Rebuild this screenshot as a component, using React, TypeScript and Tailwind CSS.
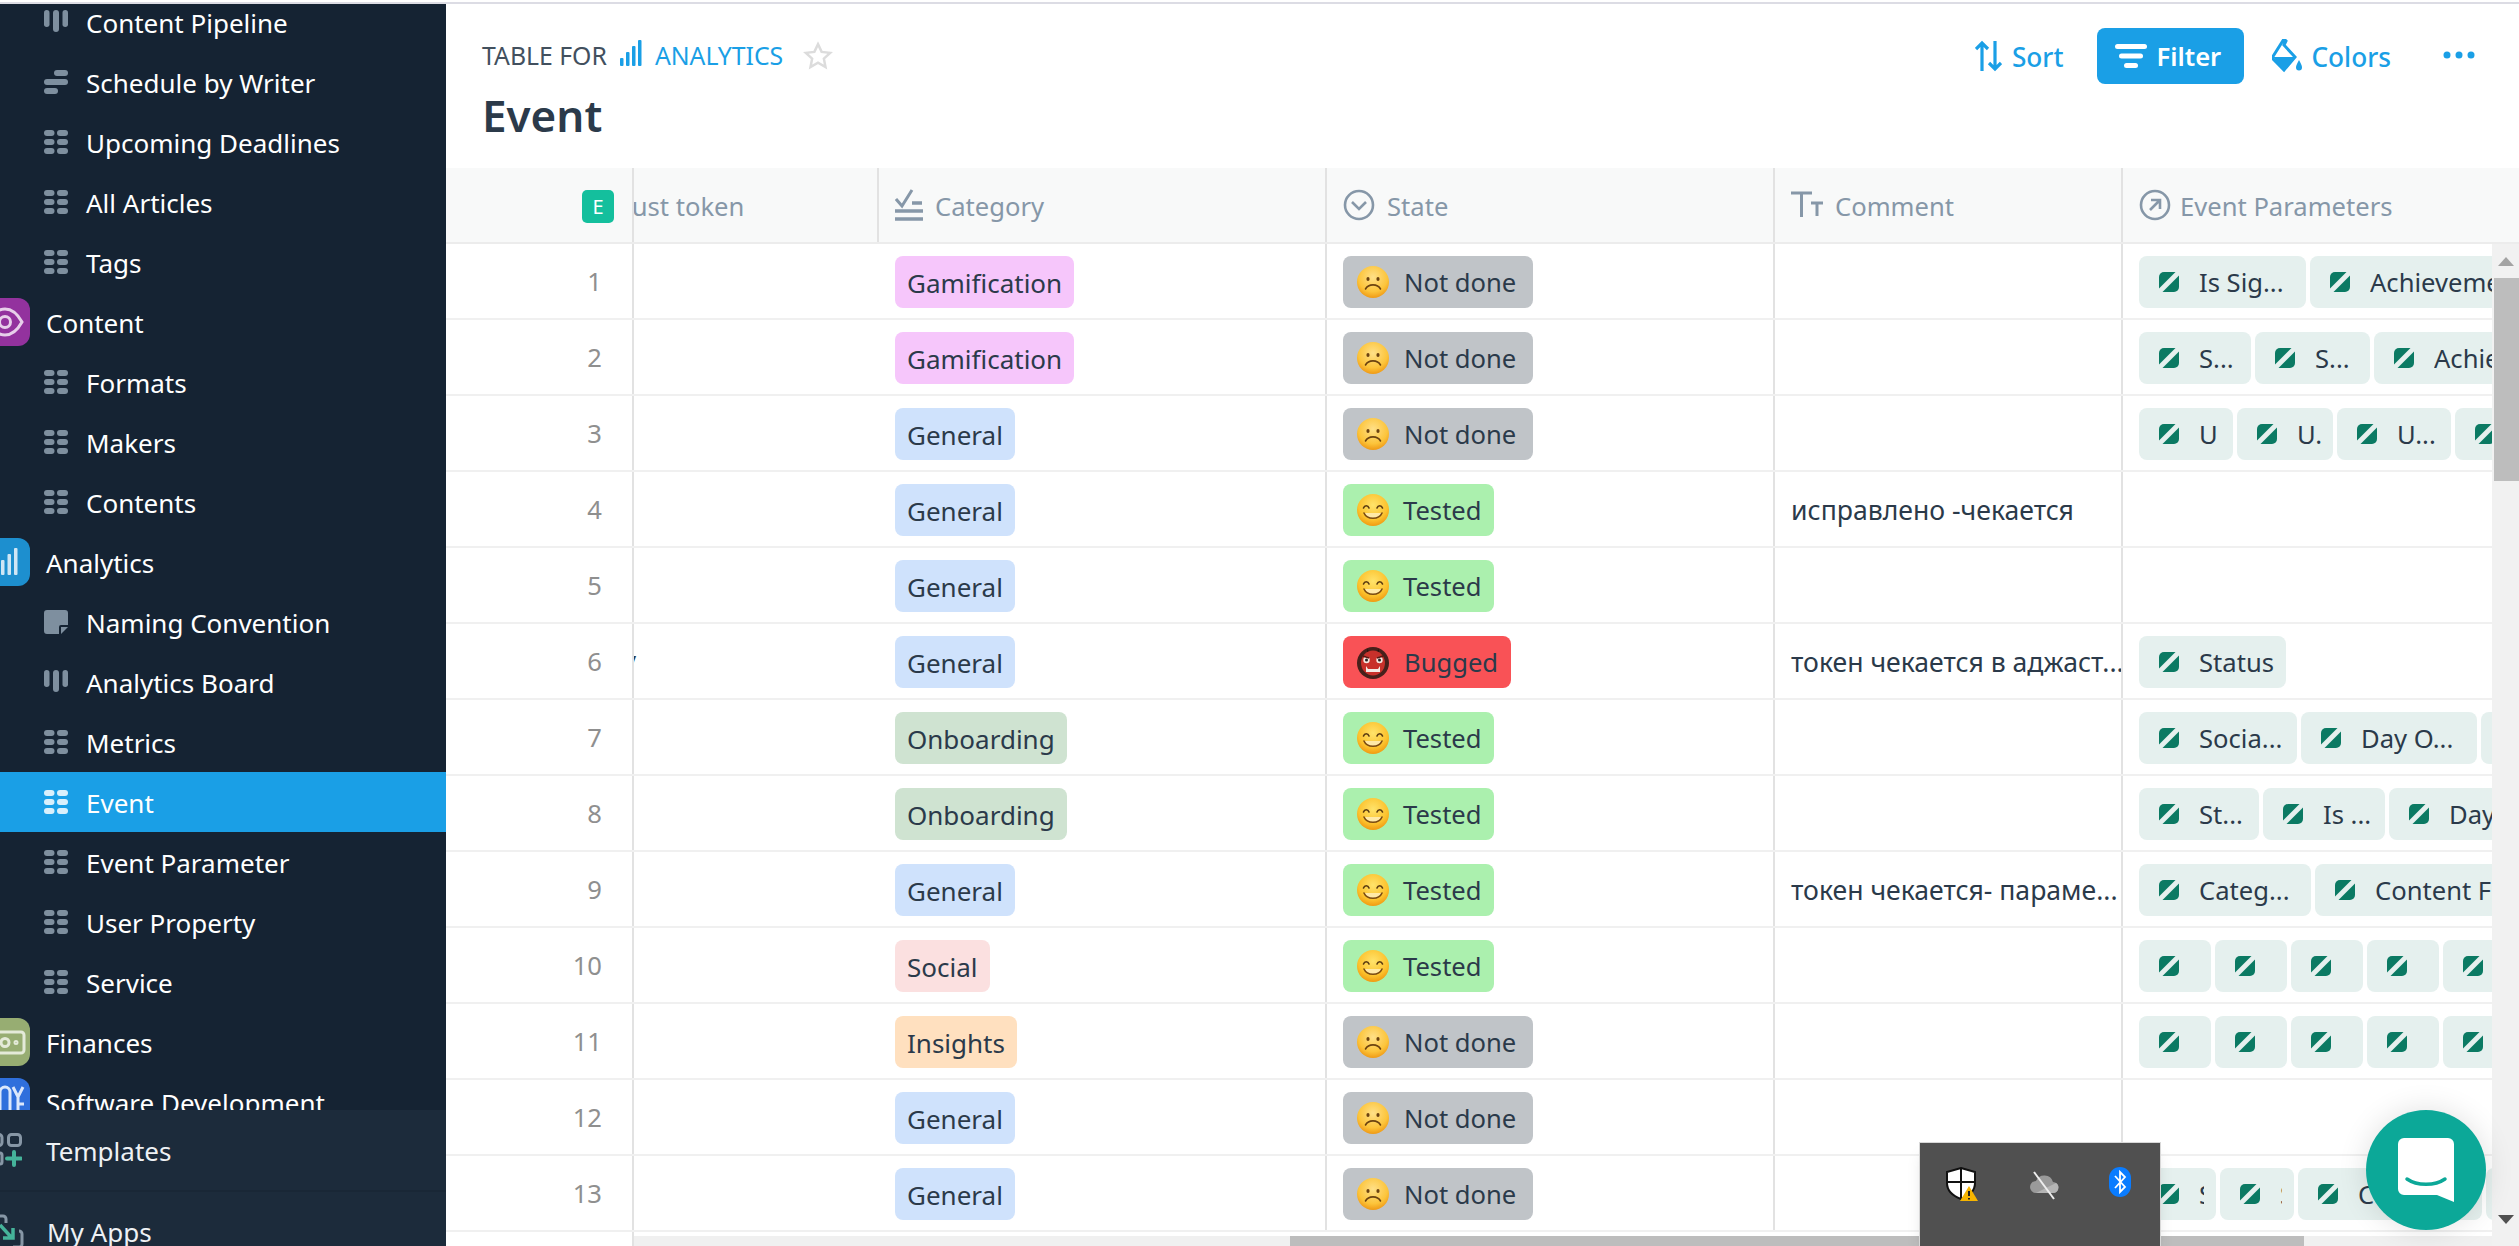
import type { ReactNode } from "react";

type NavItem =
  | { kind: "table" | "board" | "schedule" | "note"; label: string; active?: boolean }
  | { kind: "group"; label: string; icon: ReactNode; bg: string };

function GridIcon({ color = "#7e8f9f" }: { color?: string }) {
  return (
    <svg width="24" height="24" viewBox="0 0 24 24" fill={color}>
      <rect x="0" y="0" width="10.5" height="6" rx="3" />
      <rect x="13" y="0" width="11" height="6" rx="3" />
      <rect x="0" y="9" width="10.5" height="6" rx="3" />
      <rect x="13" y="9" width="11" height="6" rx="3" />
      <rect x="0" y="18" width="10.5" height="6" rx="3" />
      <rect x="13" y="18" width="11" height="6" rx="3" />
    </svg>
  );
}

function BoardIcon() {
  return (
    <svg width="24" height="24" viewBox="0 0 24 24" fill="#7e8f9f">
      <rect x="0" y="0" width="5.5" height="17" rx="2.7" />
      <rect x="9" y="0" width="6" height="22" rx="3" />
      <rect x="18.5" y="0" width="5.5" height="17" rx="2.7" />
    </svg>
  );
}

function ScheduleIcon() {
  return (
    <svg width="24" height="24" viewBox="0 0 24 24" fill="#7e8f9f">
      <rect x="10" y="0" width="14" height="6" rx="3" />
      <rect x="0" y="9" width="24" height="6" rx="3" />
      <rect x="0" y="18" width="14" height="6" rx="3" />
    </svg>
  );
}

function NoteIcon() {
  return (
    <svg width="24" height="24" viewBox="0 0 24 24" fill="#7e8f9f">
      <path d="M3 0h18a3 3 0 0 1 3 3v12h-7a2 2 0 0 0-2 2v7H3a3 3 0 0 1-3-3V3a3 3 0 0 1 3-3z" />
      <path d="M17 17h7l-7 7z" />
    </svg>
  );
}

const navItems: NavItem[] = [
  { kind: "board", label: "Content Pipeline" },
  { kind: "schedule", label: "Schedule by Writer" },
  { kind: "table", label: "Upcoming Deadlines" },
  { kind: "table", label: "All Articles" },
  { kind: "table", label: "Tags" },
  {
    kind: "group",
    label: "Content",
    bg: "bg-[#93329e]",
    icon: (
      <svg width="48" height="48" viewBox="0 0 48 48" fill="none" stroke="#e7cfea" strokeWidth="3">
        <path d="M6 24c5-9 11-13 17-13s12 4 17 13c-5 9-11 13-17 13s-12-4-17-13z" />
        <circle cx="23" cy="24" r="5.500" />
      </svg>
    ),
  },
  { kind: "table", label: "Formats" },
  { kind: "table", label: "Makers" },
  { kind: "table", label: "Contents" },
  {
    kind: "group",
    label: "Analytics",
    bg: "bg-[#1d8fcf]",
    icon: (
      <svg width="48" height="48" viewBox="0 0 48 48" fill="#cfe6f5">
        <rect x="19" y="22" width="3.500" height="15" rx="1" />
        <rect x="25.500" y="16" width="3.500" height="21" rx="1" />
        <rect x="32" y="10" width="3.500" height="27" rx="1" />
      </svg>
    ),
  },
  { kind: "note", label: "Naming Convention" },
  { kind: "board", label: "Analytics Board" },
  { kind: "table", label: "Metrics" },
  { kind: "table", label: "Event", active: true },
  { kind: "table", label: "Event Parameter" },
  { kind: "table", label: "User Property" },
  { kind: "table", label: "Service" },
  {
    kind: "group",
    label: "Finances",
    bg: "bg-[#97ad72]",
    icon: (
      <svg width="48" height="48" viewBox="0 0 48 48" fill="none" stroke="#e4ead8" strokeWidth="3">
        <rect x="4" y="14" width="38" height="21" rx="3" />
        <circle cx="23" cy="24.500" r="4" />
        <circle cx="34" cy="24.500" r="1" />
      </svg>
    ),
  },
  {
    kind: "group",
    label: "Software Development",
    bg: "bg-[#2f6fdc]",
    icon: (
      <svg width="48" height="48" viewBox="0 0 48 48" fill="none" stroke="#dbe7fb" strokeWidth="3">
        <path d="M18 34V14a5 5 0 0 1 10 0v20M31 9l5 10 5-10M36 19v15M36 26h6" />
      </svg>
    ),
  },
];

function NavRow({ item }: { item: NavItem }) {
  if (item.kind === "group") {
    return (
      <div className="flex h-[60px] items-center text-white">
        <div className={`-ml-[18px] h-12 w-12 shrink-0 overflow-hidden rounded-xl ${item.bg}`}>{item.icon}</div>
        <span className="mt-[2px] ml-4 whitespace-nowrap">{item.label}</span>
      </div>
    );
  }
  return (
    <div className={`flex h-[60px] items-center pl-11 text-white ${item.active ? "bg-[#1a9fe6]" : ""}`}>
      <div className="h-6 w-6 shrink-0">
        {item.kind === "table" && <GridIcon color={item.active ? "#d9f0fc" : "#7e8f9f"} />}
        {item.kind === "board" && <BoardIcon />}
        {item.kind === "schedule" && <ScheduleIcon />}
        {item.kind === "note" && <NoteIcon />}
      </div>
      <span className="mt-[2px] ml-[18px] whitespace-nowrap">{item.label}</span>
    </div>
  );
}

function Sidebar() {
  return (
    <aside className="flex w-[446px] shrink-0 flex-col bg-[#152333] text-[26px]">
      <div className="min-h-0 flex-1 overflow-hidden">
        <div className="-mt-3">
          {navItems.map((item) => (
            <NavRow key={item.label} item={item} />
          ))}
        </div>
      </div>
      <div className="h-[136px] shrink-0 overflow-hidden bg-[#1c2b3b] text-[#eef1f4]">
        <div className="flex h-[82px] items-center border-b-2 border-[#192736]">
          <svg width="22" height="34" viewBox="0 0 22 34" className="shrink-0" fill="none">
            <rect x="-9" y="1.500" width="11" height="11" rx="3" stroke="#8797a6" strokeWidth="3" />
            <rect x="8.500" y="1.500" width="12" height="11" rx="3" stroke="#8797a6" strokeWidth="3" />
            <rect x="-6" y="20" width="8" height="11" rx="2" stroke="#8797a6" strokeWidth="3" />
            <path d="M14 19v13M7 25.500h14" stroke="#45b39a" strokeWidth="4" strokeLinecap="round" />
          </svg>
          <span className="mt-[2px] ml-[24px]">Templates</span>
        </div>
        <div className="flex h-20 items-center">
          <svg width="24" height="36" viewBox="0 0 24 36" className="shrink-0" fill="none">
            <path d="M0 2h3a3 3 0 0 1 3 3v4" stroke="#8797a6" strokeWidth="3" />
            <path d="M19 17a3 3 0 0 1 3 3v10a3 3 0 0 1-3 3h-6" stroke="#8797a6" strokeWidth="3" />
            <path d="M0 11l12 13M13 14v10H3" stroke="#45b39a" strokeWidth="3.500" />
          </svg>
          <span className="ml-[23px]">My Apps</span>
        </div>
      </div>
    </aside>
  );
}

function LeafIcon() {
  return (
    <svg width="20" height="20" viewBox="0 0 20 20" className="shrink-0">
      <path d="M5 0h11.500L0 16.500V5a5 5 0 0 1 5-5z" fill="#0b7a63" />
      <path d="M20 3.500V15a5 5 0 0 1-5 5H3.500z" fill="#0b7a63" />
    </svg>
  );
}

type ChipData = { label?: string; width: string };

function Chip({ label, width }: ChipData) {
  return (
    <div className={`flex h-[52px] shrink-0 items-center overflow-hidden rounded-lg bg-[#e5f0ee] pr-3 pl-5 ${width}`}>
      <LeafIcon />
      {label && <span className="mt-[2px] ml-5 min-w-0 overflow-hidden whitespace-nowrap">{label}</span>}
    </div>
  );
}

function SmileFace() {
  return (
    <svg width="32" height="32" viewBox="0 0 32 32" className="shrink-0">
      <defs>
        <radialGradient id="smile-bg" cx="50%" cy="35%" r="65%">
          <stop offset="0%" stopColor="#ffe36b" />
          <stop offset="70%" stopColor="#fcc22d" />
          <stop offset="100%" stopColor="#f09a12" />
        </radialGradient>
      </defs>
      <circle cx="16" cy="16" r="16" fill="url(#smile-bg)" />
      <path d="M6.500 14c1-3 4.500-3 5.500 0M20 14c1-3 4.500-3 5.500 0" stroke="#5a3a10" strokeWidth="1.600" fill="none" strokeLinecap="round" />
      <path d="M7 19c3 7 15 7 18 0" stroke="#7a4a10" strokeWidth="1.600" fill="#ffe9a8" strokeLinecap="round" />
    </svg>
  );
}

function SadFace() {
  return (
    <svg width="32" height="32" viewBox="0 0 32 32" className="shrink-0">
      <defs>
        <radialGradient id="sad-bg" cx="50%" cy="35%" r="65%">
          <stop offset="0%" stopColor="#ffe088" />
          <stop offset="70%" stopColor="#fcc43a" />
          <stop offset="100%" stopColor="#ef9a16" />
        </radialGradient>
      </defs>
      <circle cx="16" cy="16" r="16" fill="url(#sad-bg)" />
      <ellipse cx="11" cy="13" rx="1.600" ry="2" fill="#6b4210" />
      <ellipse cx="21" cy="13" rx="1.600" ry="2" fill="#6b4210" />
      <path d="M8.500 23c3-5.500 12-5.500 15 0" stroke="#6b4210" strokeWidth="1.600" fill="none" strokeLinecap="round" />
    </svg>
  );
}

function OgreFace() {
  return (
    <svg width="34" height="34" viewBox="0 0 34 34" className="shrink-0">
      <circle cx="17" cy="18" r="16" fill="#47201b" />
      <path d="M11 4l3 3h6l3-3v6H11z" fill="#2a120e" />
      <ellipse cx="17" cy="18" rx="12" ry="12.500" fill="#c8312b" />
      <circle cx="10.500" cy="15" r="3.200" fill="#f6e9e2" />
      <circle cx="23.500" cy="15" r="3.200" fill="#f6e9e2" />
      <circle cx="10.500" cy="15" r="1.500" fill="#222" />
      <circle cx="23.500" cy="15" r="1.500" fill="#222" />
      <path d="M7 11l6 2M27 11l-6 2" stroke="#5c1510" strokeWidth="1.600" />
      <path d="M10 24h14v3H10z" fill="#f4ece6" />
      <path d="M10 21l2 3h-2zM24 21l-2 3h2z" fill="#f4ece6" />
    </svg>
  );
}

type RowData = {
  category: [string, string];
  state: "done" | "tested" | "bugged";
  comment?: string;
  chips?: ChipData[];
  clip?: boolean;
};

const iconChips: ChipData[] = [
  { width: "w-[72px]" },
  { width: "w-[72px]" },
  { width: "w-[72px]" },
  { width: "w-[72px]" },
  { width: "w-[72px]" },
];

const general: [string, string] = ["General", "bg-[#cfe2fc]"];
const gamification: [string, string] = ["Gamification", "bg-[#f6c6fb]"];
const onboarding: [string, string] = ["Onboarding", "bg-[#cfe3d1]"];

const rows: RowData[] = [
  {
    category: gamification,
    state: "done",
    chips: [
      { label: "Is Sig...", width: "w-[167px]" },
      { label: "Achievement", width: "w-[240px]" },
    ],
  },
  {
    category: gamification,
    state: "done",
    chips: [
      { label: "S...", width: "w-[112px]" },
      { label: "S...", width: "w-[115px]" },
      { label: "Achievement", width: "w-[240px]" },
    ],
  },
  {
    category: general,
    state: "done",
    chips: [
      { label: "U", width: "w-[94px]" },
      { label: "U.", width: "w-[96px]" },
      { label: "U...", width: "w-[114px]" },
      { width: "w-[72px]" },
    ],
  },
  { category: general, state: "tested", comment: "исправлено -чекается" },
  { category: general, state: "tested" },
  {
    category: general,
    state: "bugged",
    comment: "токен чекается в аджаст...",
    chips: [{ label: "Status", width: "w-[147px]" }],
    clip: true,
  },
  {
    category: onboarding,
    state: "tested",
    chips: [
      { label: "Socia...", width: "w-[158px]" },
      { label: "Day O...", width: "w-[176px]" },
      { width: "w-[72px]" },
    ],
  },
  {
    category: onboarding,
    state: "tested",
    chips: [
      { label: "St...", width: "w-[120px]" },
      { label: "Is ...", width: "w-[122px]" },
      { label: "Day", width: "w-[140px]" },
    ],
  },
  {
    category: general,
    state: "tested",
    comment: "токен чекается- параме...",
    chips: [
      { label: "Categ...", width: "w-[172px]" },
      { label: "Content Fo", width: "w-[240px]" },
    ],
  },
  { category: ["Social", "bg-[#fbe0e0]"], state: "tested", chips: iconChips },
  { category: ["Insights", "bg-[#ffe0bf]"], state: "done", chips: iconChips },
  { category: general, state: "done" },
  {
    category: general,
    state: "done",
    chips: [
      { label: "St", width: "w-[77px]" },
      { label: "St", width: "w-[74px]" },
      { label: "Content", width: "w-[184px]" },
      { width: "w-[72px]" },
    ],
  },
];

function StatePill({ state }: { state: RowData["state"] }) {
  if (state === "tested") {
    return (
      <div className="flex h-[52px] w-[151px] items-center rounded-lg bg-[#abf0ae] pl-[14px]">
        <SmileFace />
        <span className="mt-[2px] ml-[14px]">Tested</span>
      </div>
    );
  }
  if (state === "bugged") {
    return (
      <div className="flex h-[52px] w-[168px] items-center rounded-lg bg-[#f95256] pl-[13px]">
        <OgreFace />
        <span className="mt-[2px] ml-[14px]">Bugged</span>
      </div>
    );
  }
  return (
    <div className="flex h-[52px] w-[190px] items-center rounded-lg bg-[#c0c4c8] pl-[14px]">
      <SadFace />
      <span className="mt-[2px] ml-[15px]">Not done</span>
    </div>
  );
}

function Row({ row, index }: { row: RowData; index: number }) {
  return (
    <div className="flex h-[76px] border-b-2 border-[#f0f0f0] text-[25.6px] text-[#2b3a4a]">
      <div className="flex w-[188px] shrink-0 items-center justify-end border-r-2 border-[#e2e2e2] pt-[3px] pr-[30px] text-[#8f8f8f]">
        {index}
      </div>
      <div className="flex w-[245px] shrink-0 items-center overflow-hidden">
        {row.clip && <span className="-ml-[11px] text-[#2b3a4a]">y</span>}
      </div>
      <div className="w-[448px] shrink-0 border-r-2 border-[#e2e2e2] pt-3 pl-4">
        <span className={`inline-flex h-[52px] items-center rounded-lg px-3 pt-[2px] text-[26px] ${row.category[1]}`}>{row.category[0]}</span>
      </div>
      <div className="w-[448px] shrink-0 border-r-2 border-[#e2e2e2] pt-3 pl-4">
        <StatePill state={row.state} />
      </div>
      <div className="flex w-[348px] shrink-0 items-center overflow-hidden border-r-2 border-[#e2e2e2] pt-[3px] pl-4 text-[26.6px] whitespace-nowrap">
        {row.comment}
      </div>
      <div className="flex min-w-0 flex-1 gap-1 overflow-hidden pt-3 pl-4">
        {row.chips?.map((chip, i) => <Chip key={i} {...chip} />)}
      </div>
    </div>
  );
}

function HeaderCell({ width, icon, label }: { width: string; icon: ReactNode; label: string }) {
  return (
    <div className={`flex shrink-0 items-center border-r-2 border-[#e2e2e2] pl-4 ${width}`}>
      {icon}
      <span className="mt-1 ml-[12px]">{label}</span>
    </div>
  );
}

function TableHeader() {
  return (
    <div className="flex h-[76px] shrink-0 border-b-2 border-[#ececec] bg-[#f8f9f9] text-[25.6px] text-[#8697a8]">
      <div className="flex w-[188px] shrink-0 items-center justify-end border-r-2 border-[#e2e2e2] pt-[3px] pr-[18px]">
        <span className="flex h-[33px] w-8 items-center justify-center rounded-[5px] bg-[#14bf9d] text-[20px] text-white">E</span>
      </div>
      <div className="flex w-[245px] shrink-0 items-center overflow-hidden border-r-2 border-[#e2e2e2] whitespace-nowrap">
        <span className="mt-1 -ml-[41px]">Adjust token</span>
      </div>
      <HeaderCell
        width="w-[448px]"
        label="Category"
        icon={
          <svg width="28" height="32" viewBox="0 0 28 32" fill="none" stroke="#8697a8" strokeWidth="3.500">
            <path d="M1 10l6 7L17 1" strokeWidth="3" />
            <path d="M17 14h10M0 22h28M0 30h28" />
          </svg>
        }
      />
      <HeaderCell
        width="w-[448px]"
        label="State"
        icon={
          <svg width="32" height="32" viewBox="0 0 32 32" fill="none" stroke="#8697a8" strokeWidth="2.600">
            <circle cx="16" cy="16" r="14" />
            <path d="M9 13l7 7 7-7" />
          </svg>
        }
      />
      <HeaderCell
        width="w-[348px]"
        label="Comment"
        icon={
          <svg width="32" height="28" viewBox="0 0 32 28" fill="none" stroke="#8697a8" strokeWidth="3">
            <path d="M0 2h21M10.500 2v24M20 12h12M26 12v13" />
          </svg>
        }
      />
      <div className="flex min-w-0 flex-1 items-center pl-4 whitespace-nowrap">
        <svg width="32" height="32" viewBox="0 0 32 32" fill="none" stroke="#8697a8" strokeWidth="2.600">
          <circle cx="16" cy="16" r="14" />
          <path d="M11 21L21 11M12 11h9v9" />
        </svg>
        <span className="mt-1 ml-[9px]">Event Parameters</span>
      </div>
    </div>
  );
}

function PageHeader() {
  return (
    <header className="flex h-[164px] shrink-0 justify-between bg-white pr-[44px] pl-[36px]">
      <div>
        <div className="mt-[33px] flex items-center text-[24.8px] text-[#42505e]">
          <span>TABLE FOR</span>
          <svg width="22" height="26" viewBox="0 0 22 26" fill="#1a9fe6" className="mt-[-5px] ml-[13px]">
            <rect x="0" y="18" width="3.500" height="8" rx="1" />
            <rect x="6" y="12" width="3.500" height="14" rx="1" />
            <rect x="12" y="6" width="3.500" height="20" rx="1" />
            <rect x="18" y="0" width="3.500" height="26" rx="1" />
          </svg>
          <span className="ml-[13px] text-[#1a9fe6]">ANALYTICS</span>
          <svg width="32" height="30" viewBox="0 0 24 24" fill="none" stroke="#dcdcdc" strokeWidth="2" className="ml-[19px]">
            <path d="M12 2.500l2.900 6.200 6.800.8-5 4.600 1.300 6.700L12 17.400l-6 3.400 1.300-6.700-5-4.600 6.800-.8z" />
          </svg>
        </div>
        <h1 className="mt-[11px] text-[44px] leading-[60px] font-semibold text-[#2b3a4a]">Event</h1>
      </div>
      <div className="mt-6 flex h-14 items-center text-[26.2px] font-medium text-[#1a9fe6]">
        <svg width="27" height="32" viewBox="0 0 27 32" fill="none" stroke="#1a9fe6" strokeWidth="3.200">
          <path d="M7 31V3M1 9l6-6 6 6M20 1v28M14 23l6 6 6-6" />
        </svg>
        <span className="mt-[3px] ml-[10px]">Sort</span>
        <div className="ml-[34px] flex h-14 w-[147px] items-center rounded-lg bg-[#1a9fe6] pl-[18px] text-[25.6px] text-white">
          <svg width="32" height="26" viewBox="0 0 32 26" fill="#fff">
            <rect x="0" y="1" width="32" height="5" rx="2.500" />
            <rect x="4" y="10.500" width="24" height="5" rx="2.500" />
            <rect x="9" y="20" width="14" height="5" rx="2.500" />
          </svg>
          <span className="mt-[3px] ml-[9px] font-semibold">Filter</span>
        </div>
        <svg width="30" height="34" viewBox="0 0 30 34" className="ml-[28px]" fill="#1a9fe6">
          <path d="M12 0l2 2-2 4 11 12-11 13L0 19z" fill="none" stroke="#1a9fe6" strokeWidth="3" />
          <path d="M1 18h23L12 32z" />
          <path d="M27 21c2 4 3 5.500 3 7.500a3 3 0 0 1-6 0c0-2 1-3.500 3-7.500z" />
        </svg>
        <span className="mt-[3px] ml-[9px]">Colors</span>
        <svg width="32" height="8" viewBox="0 0 32 8" fill="#1a9fe6" className="mt-[-3px] ml-[52px]">
          <circle cx="4" cy="4" r="3.500" />
          <circle cx="16" cy="4" r="3.500" />
          <circle cx="28" cy="4" r="3.500" />
        </svg>
      </div>
    </header>
  );
}

function VerticalScrollbar() {
  return (
    <div className="absolute top-[76px] right-0 bottom-0 flex w-[27px] flex-col items-center bg-[#f1f1f1]">
      <div className="flex h-[34px] w-full shrink-0 items-center justify-center">
        <div className="h-0 w-0 border-x-[8px] border-b-[9px] border-x-transparent border-b-[#a3a3a3]" />
      </div>
      <div className="ml-[3px] h-[203px] w-full shrink-0 bg-[#bdbdbd]" />
      <div className="mt-auto mb-[22px] h-0 w-0 border-x-[8px] border-t-[9px] border-x-transparent border-t-[#505050]" />
    </div>
  );
}

function HorizontalScrollbar() {
  return (
    <div className="absolute right-[27px] bottom-0 left-[188px] h-[10px] bg-[#f0f0f0]">
      <div className="ml-[656px] h-full w-[1014px] bg-[#bdbdbd]" />
    </div>
  );
}

function TrayPopup() {
  return (
    <div className="absolute right-[358px] bottom-0 flex h-[104px] w-[242px] items-start justify-between border-x border-t border-[#d8d8d8] bg-[#505050] pt-6 pr-[29px] pl-[26px] shadow-lg">
      <svg width="32" height="34" viewBox="0 0 32 34">
        <path d="M15 1l14 4v11c0 8-6 13-14 16C7 29 1 24 1 16V5z" fill="#fff" stroke="#111" strokeWidth="2" />
        <path d="M15 1v31M1 15h28" stroke="#111" strokeWidth="2" />
        <path d="M23 19l9 15H14z" fill="#f7b500" />
        <path d="M23 24v5M23 31v1.500" stroke="#222" strokeWidth="2" />
      </svg>
      <svg width="32" height="32" viewBox="0 0 32 32" className="mt-[2px]">
        <path d="M8 24a6 6 0 0 1 0-12 9 9 0 0 1 17 1 5.500 5.500 0 0 1 0 11z" fill="#9a9a9a" />
        <path d="M8 24h17a5.500 5.500 0 0 0 3-10z" fill="#b5b5b5" />
        <path d="M6 3l20 27" stroke="#eee" strokeWidth="2" />
      </svg>
      <svg width="22" height="30" viewBox="0 0 22 30">
        <rect x="0" y="0" width="22" height="30" rx="11" fill="#0a7cff" />
        <path d="M6 9l10 11-5 5V5l5 5L6 21" stroke="#fff" strokeWidth="1.800" fill="none" />
      </svg>
    </div>
  );
}

function ChatBubble() {
  return (
    <div className="absolute right-[33px] bottom-4 flex h-[120px] w-[120px] items-center justify-center rounded-full bg-[#0ca898] shadow-[0_0_30px_rgba(0,0,0,0.12)]">
      <svg width="56" height="64" viewBox="0 0 56 64">
        <path d="M6 0h44a6 6 0 0 1 6 6v58l-17-7H6a6 6 0 0 1-6-6V6a6 6 0 0 1 6-6z" fill="#fff" />
        <path d="M9 41c10 7 28 7 38 0" stroke="#0ca898" strokeWidth="3.500" fill="none" strokeLinecap="round" />
      </svg>
    </div>
  );
}

export default function App() {
  return (
    <div className="relative flex h-[1246px] w-[2519px] flex-col overflow-hidden bg-white font-['Noto_Sans',sans-serif]">
      <div className="mt-[2px] h-[2px] shrink-0 bg-[#dcdce4]" />
      <div className="flex min-h-0 flex-1">
        <Sidebar />
        <main className="flex min-w-0 flex-1 flex-col">
          <PageHeader />
          <div className="relative min-h-0 flex-1 overflow-hidden">
            <TableHeader />
            {rows.map((row, i) => (
              <Row key={i} row={row} index={i + 1} />
            ))}
            <div className="h-6 w-[188px] border-r-2 border-[#e2e2e2]" />
            <VerticalScrollbar />
            <HorizontalScrollbar />
          </div>
        </main>
      </div>
      <TrayPopup />
      <ChatBubble />
    </div>
  );
}
